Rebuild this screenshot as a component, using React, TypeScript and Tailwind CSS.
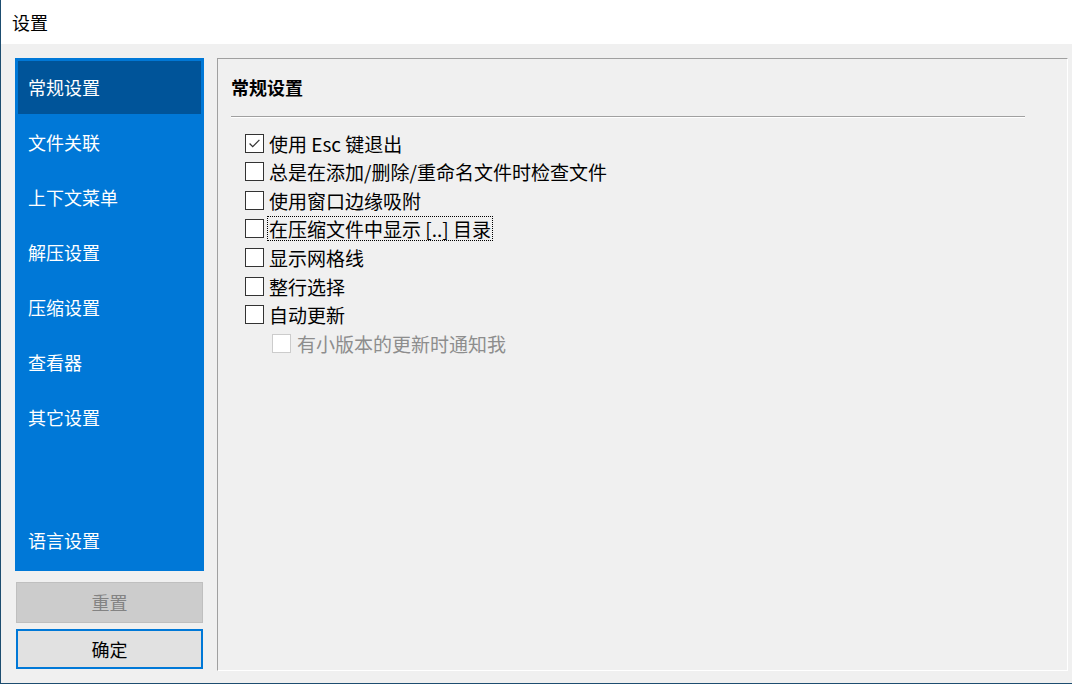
const font = { fontFamily: '"Noto Sans CJK SC", "Noto Sans", sans-serif' };

const navItems = ["常规设置", "文件关联", "上下文菜单", "解压设置", "压缩设置", "查看器", "其它设置"];

const options = [
  { label: "使用 Esc 键退出", checked: true },
  { label: "总是在添加/删除/重命名文件时检查文件" },
  { label: "使用窗口边缘吸附" },
  { label: "在压缩文件中显示 [..] 目录", focused: true },
  { label: "显示网格线" },
  { label: "整行选择" },
  { label: "自动更新" },
];

function CheckBox({ checked, disabled }: { checked?: boolean; disabled?: boolean }) {
  return (
    <span
      className={
        "flex size-[19px] shrink-0 items-center justify-center border bg-white " +
        (disabled ? "border-[#cccccc]" : "border-[#333333]")
      }
    >
      {checked && (
        <svg viewBox="0 0 19 19" className="size-[19px]">
          <path d="M4 9.5 L7.5 13 L15 5.5" fill="none" stroke="#333" strokeWidth="1.4" />
        </svg>
      )}
    </span>
  );
}

export default function App() {
  return (
    <div
      className="flex h-[684px] w-[1072px] flex-col border-b border-l border-[#1d4d70] bg-[#f0f0f0] text-black"
      style={font}
    >
      <div className="flex h-[44px] shrink-0 items-center bg-white pl-[11px] text-[18px]">设置</div>

      <div className="flex flex-1 pl-[14px] pt-[14px] pb-[12px]">
        <div className="flex w-[189px] flex-col">
          <div className="flex h-[513px] flex-col bg-[#0078d7] px-[3px] pt-[3px] pb-[4px] text-[18px] text-white">
            {navItems.map((t, i) => (
              <div
                key={t}
                className={
                  "mb-[2px] flex h-[53px] items-center pl-[10px] " + (i === 0 ? "bg-[#005499]" : "")
                }
              >
                {t}
              </div>
            ))}
            <div className="mt-auto flex h-[53px] items-center pl-[10px]">语言设置</div>
          </div>
          <button className="mt-[11px] ml-px flex h-[41px] w-[187px] items-center justify-center border border-[#bfbfbf] bg-[#cccccc] text-[18px] text-[#838383]">
            重置
          </button>
          <button className="mt-[6px] ml-px flex h-[40px] w-[187px] items-center justify-center border-2 border-[#0078d7] bg-[#e1e1e1] text-[18px]">
            确定
          </button>
        </div>

        <div className="ml-[13px] w-[851px] border-t border-l border-r border-b border-t-[#a0a0a0] border-l-[#a0a0a0] border-r-white border-b-white pl-[13px]">
          <div className="flex h-[57px] items-center text-[18px] font-bold">常规设置</div>
          <div className="w-[794px] border-t border-b border-t-[#a0a0a0] border-b-white" />
          <div className="mt-[11px] flex flex-col pl-[14px] text-[19px]">
            {options.map((o) => (
              <div key={o.label} className="flex h-[28.55px] items-center">
                <CheckBox checked={o.checked} />
                <span
                  className={
                    "ml-[3px] flex h-[25px] items-center px-px leading-none " +
                    (o.focused ? "border border-dotted border-black" : "border border-transparent")
                  }
                >
                  {o.label}
                </span>
              </div>
            ))}
            <div className="flex h-[28.55px] items-center pl-[27px]">
              <CheckBox disabled />
              <span className="ml-[5px] px-px leading-none text-[#8d8d8d]">有小版本的更新时通知我</span>
            </div>
          </div>
        </div>
      </div>
    </div>
  );
}
